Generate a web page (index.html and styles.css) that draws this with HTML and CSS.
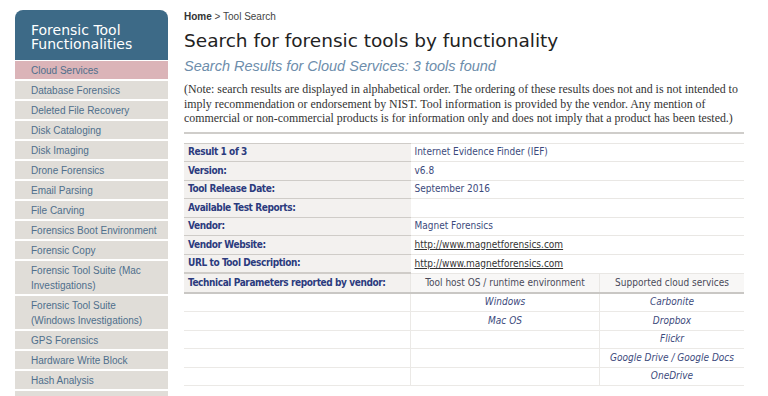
FILE: index.html
```html
<!DOCTYPE html>
<html>
<head>
    <title>Search for forensic tools by functionality</title>
    <link rel="stylesheet" href="styles.css">
</head>
<body>
    <div class="page">
        <!-- Sidebar: functionality list -->
        <div class="sidebar">
            <div class="side-head">Forensic Tool Functionalities</div>
            <ul class="side-menu">
                <li class="active">Cloud Services</li>
                <li>Database Forensics</li>
                <li>Deleted File Recovery</li>
                <li>Disk Cataloging</li>
                <li>Disk Imaging</li>
                <li>Drone Forensics</li>
                <li>Email Parsing</li>
                <li>File Carving</li>
                <li>Forensics Boot Environment</li>
                <li>Forensic Copy</li>
                <li>Forensic Tool Suite (Mac Investigations)</li>
                <li>Forensic Tool Suite (Windows Investigations)</li>
                <li>GPS Forensics</li>
                <li>Hardware Write Block</li>
                <li>Hash Analysis</li>
                <li class="more"></li>
            </ul>
        </div>

        <div class="main">
            <div class="crumbs"><b>Home</b> &gt; Tool Search</div>
            <h1>Search for forensic tools by functionality</h1>
            <h2>Search Results for Cloud Services: 3 tools found</h2>
            <p class="note">(Note: search results are displayed in alphabetical order. The ordering of these results does not and is not intended to imply recommendation or endorsement by NIST. Tool information is provided by the vendor. Any mention of commercial or non-commercial products is for information only and does not imply that a product has been tested.)</p>
            <hr>

            <table class="result">
                <tr><th>Result 1 of 3</th><td colspan="2">Internet Evidence Finder (IEF)</td></tr>
                <tr><th>Version:</th><td colspan="2">v6.8</td></tr>
                <tr><th>Tool Release Date:</th><td colspan="2">September 2016</td></tr>
                <tr><th>Available Test Reports:</th><td colspan="2"></td></tr>
                <tr><th>Vendor:</th><td colspan="2">Magnet Forensics</td></tr>
                <tr><th>Vendor Website:</th><td colspan="2"><a href="#">http://www.magnetforensics.com</a></td></tr>
                <tr><th>URL to Tool Description:</th><td colspan="2"><a href="#">http://www.magnetforensics.com</a></td></tr>
                <tr class="param-head">
                    <th>Technical Parameters reported by vendor:</th>
                    <td class="col-os">Tool host OS / runtime environment</td>
                    <td class="col-cloud">Supported cloud services</td>
                </tr>
                <tr class="param"><td class="blank"></td><td>Windows</td><td>Carbonite</td></tr>
                <tr class="param"><td class="blank"></td><td>Mac OS</td><td>Dropbox</td></tr>
                <tr class="param"><td class="blank"></td><td></td><td>Flickr</td></tr>
                <tr class="param"><td class="blank"></td><td></td><td>Google Drive / Google Docs</td></tr>
                <tr class="param"><td class="blank"></td><td></td><td>OneDrive</td></tr>
            </table>
        </div>
    </div>
</body>
</html>
```

FILE: styles.css
```css
body {
    margin: 0;
    font-family: "Liberation Sans", Arial, sans-serif;
    background-color: #ffffff;
    color: #333333;
}

.page {
    display: flex;
    align-items: flex-start;
    padding: 10px 0 0 15px;
}

.sidebar {
    width: 153px;
    flex-shrink: 0;
}

.side-head {
    background-color: #3d6a87;
    color: #ffffff;
    font-family: "DejaVu Sans", sans-serif;
    font-size: 14px;
    line-height: 13.5px;
    padding: 14px 10px 9px 16px;
    border-radius: 8px 8px 0 0;
    margin-bottom: 1px;
}

.side-menu {
    list-style: none;
    margin: 0;
    padding: 0;
}

.side-menu li {
    background-color: #e0ddd8;
    color: #4f6f8c;
    font-size: 10px;
    line-height: 15px;
    padding: 1.5px 8px 1.5px 16px;
    margin-bottom: 2px;
}

.side-menu li.active {
    background-color: #dbb4b8;
}

.side-menu li.more {
    height: 15px;
}

.main {
    margin-left: 16px;
    width: 560px;
}

.crumbs {
    font-size: 10px;
    color: #444444;
    margin-top: 1px;
    line-height: 12px;
}

.crumbs b {
    color: #333333;
}

h1 {
    font-family: "DejaVu Sans", sans-serif;
    font-weight: normal;
    font-size: 18.5px;
    color: #222222;
    margin: 6px 0 0 0;
    line-height: 24px;
}

h2 {
    font-style: italic;
    font-weight: normal;
    font-size: 14.5px;
    color: #6d8dab;
    margin: 4px 0 0 0;
    line-height: 18px;
}

.note {
    font-family: "Liberation Serif", "Times New Roman", serif;
    font-size: 11.9px;
    line-height: 14.5px;
    color: #333333;
    margin: 7px 0 0 0;
}

hr {
    border: none;
    border-top: 2px solid #cfcdca;
    margin: 6px 0 9px 0;
}

.result {
    width: 560px;
    border-collapse: collapse;
    font-family: "DejaVu Sans Condensed", "DejaVu Sans", sans-serif;
    font-size: 10px;
}

.result th,
.result td {
    height: 17.5px;
    padding: 0 4px;
    line-height: 12px;
    text-align: left;
    vertical-align: middle;
}

.result th {
    width: 218px;
    background-color: #f3f1ef;
    color: #2b3b7e;
    font-weight: bold;
    letter-spacing: -0.4px;
    border-top: 1px solid #cfccc8;
}

.result td {
    color: #3c4a7c;
    border-top: 1px solid #e9e7e4;
}

.result a {
    color: #333333;
}

.param-head th {
    border-top: 2px solid #cfccc8;
    border-bottom: 2px solid #c9c7c4;
}

.param-head td {
    background-color: #f8f7f6;
    color: #4a4a5a;
    text-align: center;
    border-left: 1px solid #e9e7e4;
    border-bottom: 2px solid #c9c7c4;
}

.param-head .col-os {
    width: 180px;
}

.param td {
    text-align: center;
    font-style: italic;
    border-left: 1px solid #ebe9e6;
    border-bottom: 1px solid #ebe9e6;
}

.param td.blank {
    border-left: none;
}
```
